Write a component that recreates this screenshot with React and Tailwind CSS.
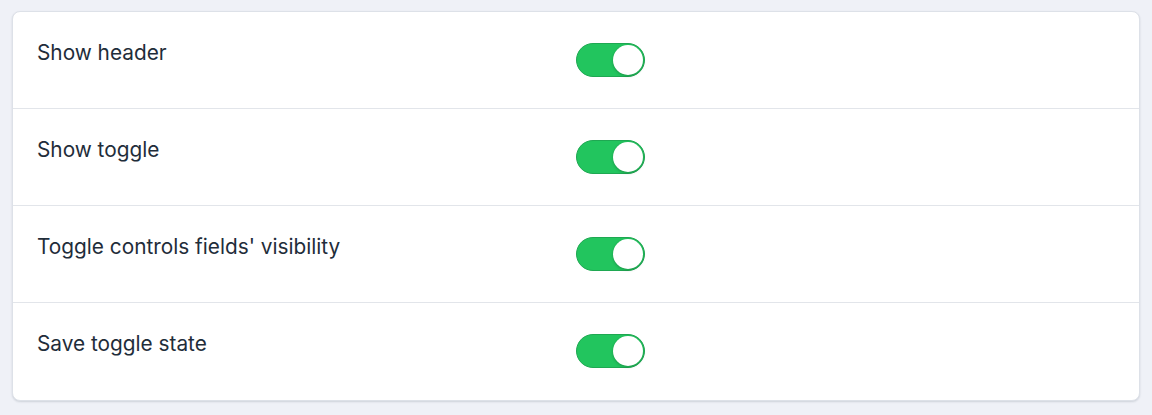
const rows = [
  { label: 'Show header', on: true },
  { label: 'Show toggle', on: true },
  { label: "Toggle controls fields' visibility", on: true },
  { label: 'Save toggle state', on: true },
];

function Toggle({ on }) {
  return (
    <span
      className={`relative inline-flex h-[34px] w-[69px] items-center rounded-full border ${
        on ? 'bg-[#22c55e] border-[#1fa852]' : 'bg-gray-300 border-gray-300'
      }`}
    >
      <span
        className={`absolute top-[1px] h-[30px] w-[30px] rounded-full bg-white shadow-[0_1px_3px_rgba(0,0,0,0.25)] ${
          on ? 'right-[1px]' : 'left-[1px]'
        }`}
      />
    </span>
  );
}

export default function App() {
  return (
    <div className="min-h-[415px] bg-[#eff1f7] px-3 pt-[11px] pb-4" style={{ fontFamily: 'Inter, "Noto Sans", sans-serif' }}>
      <div className="rounded-lg border border-[#dde1e8] bg-white shadow-[0_1px_2px_rgba(30,41,59,0.15)]">
        {rows.map((r, i) => (
          <div
            key={r.label}
            className={`grid h-[97px] grid-cols-2 px-6 pt-[27px] ${i < rows.length - 1 ? 'border-b border-[#e2e5ea]' : ''}`}
          >
            <div className="text-[20.8px] leading-7 text-[#1f2d3a]">{r.label}</div>
            <div className="pt-[4px]">
              <Toggle on={r.on} />
            </div>
          </div>
        ))}
      </div>
    </div>
  );
}
